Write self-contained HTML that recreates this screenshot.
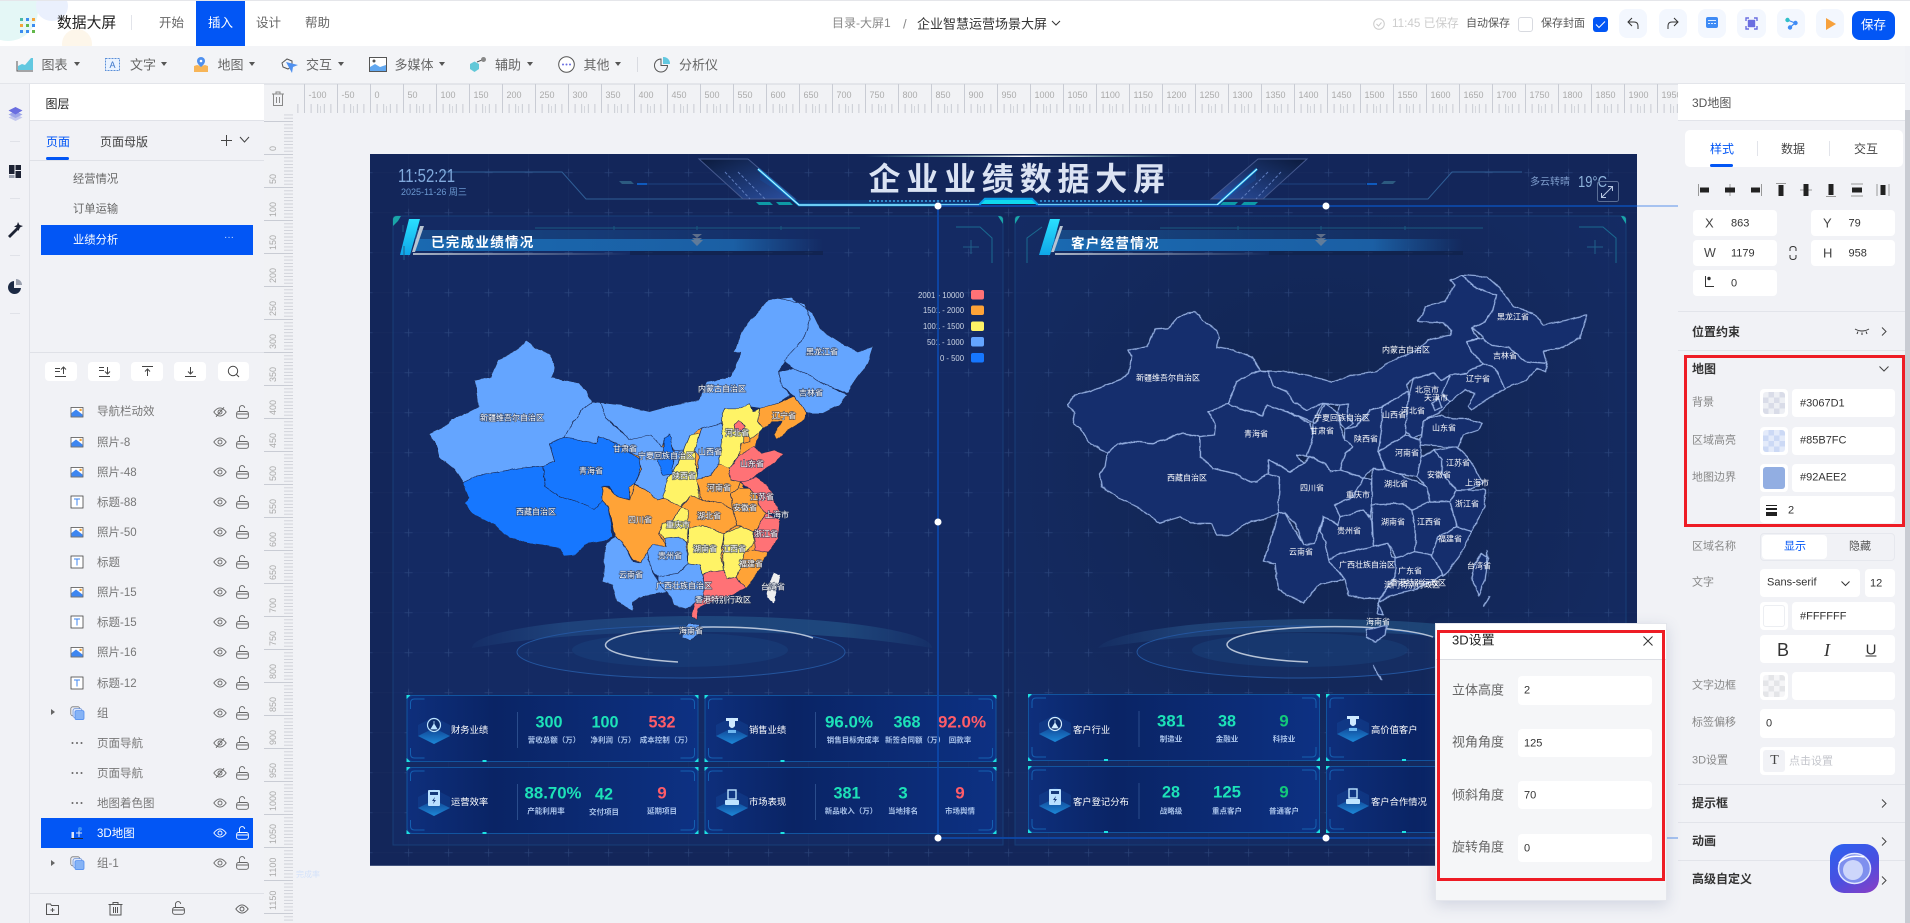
<!DOCTYPE html>
<html lang="zh"><head><meta charset="utf-8"><title>数据大屏</title>
<style>
*{box-sizing:border-box}
html,body{margin:0;padding:0;width:1910px;height:923px;overflow:hidden;background:#f1f2f6;font-family:"Liberation Sans","Noto Sans CJK SC",sans-serif;color:#333}
.a{position:absolute}
.t{position:absolute;white-space:nowrap;line-height:1;transform:translateY(-50%)}
.c{position:absolute;white-space:nowrap;line-height:1;transform:translate(-50%,-50%)}
svg{display:block}
.ic{position:absolute;overflow:visible}
.tb{font-size:13px;color:#666}
.caret{position:absolute;top:62px;width:0;height:0;border-left:3px solid transparent;border-right:3px solid transparent;border-top:4.5px solid #555}
.sq{position:absolute;top:9px;width:28px;height:29px;background:#f3f7fe;border-radius:8px}
.row{position:absolute;left:41px;width:212px;height:30px;color:#777;font-size:11.5px}
.row b{position:absolute;left:56px;top:9.5px;font-weight:400;line-height:13px;white-space:nowrap}
.row svg{position:absolute}
.row .i{left:29px;top:8px;width:14px;height:14px}
.row .e{left:172px;top:10px;width:14px;height:10px;color:#666}
.row .l{left:195px;top:8px;width:13px;height:14px;color:#666}
.tool{position:absolute;top:362px;height:19px;background:#fff;border-radius:4px}
.inp{position:absolute;background:#fff;border-radius:4px}
.lb{font-size:11px;color:#888}
.v{font-size:11px;color:#333}
.sec{font-size:12px;color:#333;font-weight:700}
.hr{position:absolute;left:1678px;width:227px;height:1px;background:#e2e4ea}
.ruler-x{position:absolute;left:304px;top:84px;height:29px;display:flex;font-size:9px;color:#aaa}
.ruler-x span{display:block;width:33px;flex:none;padding:6px 0 0 4.5px;line-height:10px}
.ruler-y{position:absolute;left:264px;top:121px;width:19px;font-size:9px;color:#aaa}
.ruler-y span{display:block;height:33px;width:19px;writing-mode:vertical-rl;transform:rotate(180deg);line-height:19px;padding-top:3px}
</style></head><body>

<svg width="0" height="0" style="position:absolute">
<defs>
<filter id="rough" x="-5%" y="-5%" width="110%" height="110%" color-interpolation-filters="sRGB"><feTurbulence type="fractalNoise" baseFrequency=".035" numOctaves="3" seed="4"/><feDisplacementMap in="SourceGraphic" scale="9" xChannelSelector="R" yChannelSelector="G"/></filter>
<symbol id="eye" viewBox="0 0 14 10"><path d="M.8 5C3 2 5 .9 7 .9s4 1.1 6.2 4.1C11 8 9 9.1 7 9.1S3 8 .8 5z" fill="none" stroke="currentColor" stroke-width=".9"/><circle cx="7" cy="5" r="2" fill="none" stroke="currentColor" stroke-width=".9"/></symbol>
<symbol id="eyeoff" viewBox="0 0 14 10"><path d="M.8 5C3 2 5 .9 7 .9s4 1.1 6.2 4.1C11 8 9 9.1 7 9.1S3 8 .8 5z" fill="none" stroke="currentColor" stroke-width=".9"/><circle cx="7" cy="5" r="2" fill="none" stroke="currentColor" stroke-width=".9"/><path d="M3 9.8L11 .3" stroke="currentColor" stroke-width=".9"/></symbol>
<symbol id="lock" viewBox="0 0 13 14"><rect x=".6" y="6.5" width="11.8" height="6.8" rx="2" fill="none" stroke="currentColor" stroke-width=".9"/><path d="M3.5 6.5V3.5a2.6 2.6 0 0 1 5.2-.6M.8 9h11.4" fill="none" stroke="currentColor" stroke-width=".9"/></symbol>
<symbol id="img" viewBox="0 0 14 14"><rect x="1" y="2.5" width="12" height="9.5" fill="#fff" stroke="#555" stroke-width=".8"/><path d="M1.5 11.5V8L6 4.5l6.5 5v2z" fill="#3e86f0"/><rect x="9.5" y="3.8" width="2.2" height="2.2" fill="#f4a438"/></symbol>
<symbol id="tx" viewBox="0 0 14 14"><rect x="1" y="1" width="12" height="12" fill="#fff" stroke="#444" stroke-width=".8"/><path d="M4 4h6M7 4v6.5" fill="none" stroke="#3e86f0"/></symbol>
<symbol id="grp" viewBox="0 0 15 14"><rect x=".8" y=".8" width="9" height="9" rx="2" fill="none" stroke="#777" stroke-width=".8"/><rect x="3" y="2.6" width="9" height="9" rx="2" fill="#dde7fb" stroke="#6d93d8" stroke-width=".8"/><rect x="5" y="4.6" width="9" height="9" rx="1.5" fill="#86b3f5" stroke="#4f8cf0" stroke-width=".8"/></symbol>
<symbol id="dots" viewBox="0 0 14 14"><circle cx="2.5" cy="7" r="1" fill="#666"/><circle cx="7" cy="7" r="1" fill="#666"/><circle cx="11.5" cy="7" r="1" fill="#666"/></symbol>
<linearGradient id="dia" x1="0" y1="0" x2="0" y2="1"><stop offset="0" stop-color="#0d3d8a"/><stop offset="1" stop-color="#1f9be8"/></linearGradient>
<linearGradient id="cardg" x1="0" y1="0" x2="1" y2="0"><stop offset="0" stop-color="#0e2f7c"/><stop offset=".3" stop-color="#0a2465"/><stop offset="1" stop-color="#0d3183"/></linearGradient>
<symbol id="card" viewBox="0 0 292 67" overflow="visible">
<rect x=".5" y=".5" width="291" height="66" rx="5" fill="url(#cardg)" stroke="#12549f"/>
<path d="M4 14V8q0-4 4-4h10M274 4h10q4 0 4 4v6M4 53v6q0 4 4 4h10M274 63h10q4 0 4-4v-6" fill="none" stroke="#155fb0"/>
<path d="M0 4V0h4zM292 4V0h-4zM0 63v4h4zM292 63v4h-4z" fill="#1de2e2"/>
<rect x="76" y="65" width="4" height="2" fill="#1de2e2"/>
<path d="M111 17V53" stroke="#2a4c8c"/>
</symbol>
<g id="iso"><path d="M-16 1L0 -7L16 1L0 9z" fill="url(#dia)"/><path d="M-16 1L0 9L16 1L16 -10L0 -18L-16 -10z" fill="#1a56ab" opacity=".28"/></g>
<pattern id="cross" width="40" height="40" patternUnits="userSpaceOnUse" x="-11.4" y="-7.3"><path d="M20 16V24M16 20H24" stroke="#5c7fba" stroke-opacity=".26" stroke-width=".8"/><path d="M0 20H40M20 0V40" stroke="#5c7fba" stroke-opacity=".04"/></pattern>
<linearGradient id="ban1" x1="0" x2="1" y1="0" y2="0"><stop offset="0" stop-color="#1a69b0"/><stop offset=".78" stop-color="#1b5fa4"/><stop offset="1" stop-color="#1b5a9e" stop-opacity="0"/></linearGradient>
<linearGradient id="ban2" x1="0" x2="1" y1="0" y2="0"><stop offset="0" stop-color="#1a5c9c" stop-opacity=".6"/><stop offset="1" stop-color="#1a5c9c" stop-opacity="0"/></linearGradient>
<linearGradient id="und" x1="0" x2="1" y1="0" y2="0"><stop offset="0" stop-color="#a9b3c4"/><stop offset="1" stop-color="#a9b3c4" stop-opacity="0"/></linearGradient>
<linearGradient id="cy" x1="0" x2="0" y1="0" y2="1"><stop offset="0" stop-color="#2ae0ff"/><stop offset="1" stop-color="#0fa6e8"/></linearGradient>
<linearGradient id="trap" x1="0" x2="1" y1="0" y2="1"><stop offset="0" stop-color="#0b1a3c"/><stop offset="1" stop-color="#2b4fa0"/></linearGradient>
<linearGradient id="trap2" x1="1" x2="0" y1="0" y2="1"><stop offset="0" stop-color="#0b1a3c"/><stop offset="1" stop-color="#2b4fa0"/></linearGradient>
<linearGradient id="topl" x1="0" x2="1" y1="0" y2="0"><stop offset="0" stop-color="#9fd" stop-opacity="0"/><stop offset=".5" stop-color="#fff"/><stop offset="1" stop-color="#9fd" stop-opacity="0"/></linearGradient>
<linearGradient id="ringb" x1="0" x2="1" y1="0" y2="0"><stop offset="0" stop-color="#2b5f96" stop-opacity=".08"/><stop offset=".2" stop-color="#2b5f96" stop-opacity=".45"/><stop offset=".8" stop-color="#2b6a9a" stop-opacity=".45"/><stop offset="1" stop-color="#2b6a9a" stop-opacity=".08"/></linearGradient>
<radialGradient id="cv" cx=".5" cy=".4" r=".7"><stop offset="0" stop-color="#11244f"/><stop offset="1" stop-color="#152c66"/></radialGradient>
<clipPath id="clipC"><rect x="370" y="154" width="1267" height="712"/></clipPath>
</defs>
</svg>

<!-- CANVAS -->
<svg class="a" style="left:0;top:0;font-family:'Liberation Sans','Noto Sans CJK SC',sans-serif" width="1910" height="923" viewBox="0 0 1910 923">
<g clip-path="url(#clipC)">
<rect x="370" y="154" width="1267" height="712" fill="#13265a"/>
<rect x="393" y="216" width="610" height="629" fill="#14295f"/>
<rect x="1015" y="216" width="611" height="629" fill="url(#cv)"/>
<rect x="393" y="216" width="610" height="629" fill="#16306e" opacity=".3"/>
<rect x="370" y="154" width="1267" height="712" fill="url(#cross)"/>
<path d="M393 845V220q0-4 4-4H999q4 0 4 4V845zM1015 845V220q0-4 4-4H1622q4 0 4 4V845z" fill="none" stroke="#173f78"/>
<path d="M398 221l-5 5v-6q0-4 4-4h4zM998 216h1q4 0 4 4v4zM1020 216h-1q-4 0-4 4v4zM1621 216h1q4 0 4 4v4z" fill="#1aa5a8"/>
<!-- header lines -->
<path d="M442 172H562L586 199H744M1522 172H1452L1428 199H1263" fill="none" stroke="#2f5e96"/>
<path d="M647 184H727M1278 184H1366" stroke="#1c4180"/>
<path d="M619 181h12l3 3h-12zM1381 184h12l3-3h-12z" fill="#2c5a80"/>
<rect x="637" y="183" width="10" height="2" fill="#0f5abd"/><rect x="1367" y="183" width="10" height="2" fill="#0f5abd"/>
<path d="M699 159H748L795 199H743z" fill="url(#trap)" stroke="#45598f"/>
<path d="M1307 159H1258L1211 199H1263z" fill="url(#trap2)" stroke="#45598f"/>
<path d="M738 172L765 199M725 172L750 199M1268 172L1241 199M1281 172L1256 199" stroke="#5d7bbc" stroke-dasharray="3 2"/>
<path d="M756 202h14l3 3h-14zM776 202h14l3 3h-14zM1238 202h-15l-3 3h15zM1258 202h-14l-3 3h14z" fill="#0e9aa6"/>
<rect x="864" y="155.5" width="319" height="1.5" fill="url(#topl)"/>
<path d="M760 180l38 24h420l38-24v-12l-38 32H798l-38-32z" fill="#0f60c0" opacity=".22"/>
<path d="M758 169L799 205H979L985 199H1032L1038 205H1217L1257 169" fill="none" stroke="#0a9fe8" stroke-width="2.4"/>
<path d="M758 169L799 205H979M1038 205H1217L1257 169" fill="none" stroke="#cdf8ff" stroke-width=".9"/>
<path d="M981 204l4-4h47l4 4z" fill="#10d9ec"/>
<path d="M869 201H970M1040 201H1142" stroke="#2f88c8" stroke-width="2" stroke-dasharray="2 2"/>
<!-- header text -->
<text x="868.5" y="190" fill="#dbe3f3" font-size="32" font-weight="700" letter-spacing="5.8" font-family="'Noto Sans CJK SC',sans-serif">企业业绩数据大屏</text>
<text x="398" y="182" fill="#80a9dc" font-size="18" textLength="57" lengthAdjust="spacingAndGlyphs">11:52:21</text>
<text x="401" y="195" fill="#6b98d0" font-size="9">2025-11-26   周三</text>
<text x="1530" y="185" fill="#7d9ccc" font-size="10">多云转晴</text>
<text x="1578" y="187" fill="#8fb4dc" font-size="16" textLength="29" lengthAdjust="spacingAndGlyphs">19°C</text>
<rect x="1597.5" y="181.5" width="21" height="20" rx="2" fill="none" stroke="#5a6e96"/>
<path d="M1602 197l10-10M1608 186.5h4.5v4.5M1606 197.500h-4.5v-4.5" stroke="#b9c8e2" fill="none"/>
<!-- Left banner -->
<rect x="415" y="230" width="408" height="9" fill="url(#ban2)"/>
<rect x="415" y="239" width="408" height="12" fill="url(#ban1)"/>
<rect x="630" y="251" width="193" height="4" fill="#0f1f46" opacity=".6"/>
<rect x="413" y="253" width="217" height="2" fill="url(#und)"/>
<path d="M409 219H420L410 255H400z" fill="url(#cy)"/>
<path d="M420 226H424L415 252H412z" fill="#b8c4d2"/>
<path d="M535 228H860M614 226v4M697 226v4M781 226v4" stroke="#1a5a80"/>
<path d="M692 234h10l-5 4zM692 238h10l-5 4zM691 240h12l-6 6z" fill="#7d8896" opacity=".7"/>
<text x="431" y="247" fill="#fff" font-size="13.5" font-weight="700" letter-spacing="1.3">已完成业绩情况</text>
<path d="M956 227H980L992 238V263M1579 227H1603L1616 238V263M1042 227L1027 238V263" fill="none" stroke="#1a6a90"/>
<path d="M971 240V254M963 247H979M1595 240V254M1587 247H1603" stroke="#1f5f8a"/>
<path d="M403 232V225M404 246v14" stroke="#1f5f8a"/>
<!-- Right banner -->
<rect x="1053" y="230" width="410" height="9" fill="url(#ban2)"/>
<rect x="1053" y="239" width="410" height="12" fill="url(#ban1)"/>
<rect x="1269" y="251" width="194" height="4" fill="#0f1f46" opacity=".6"/>
<rect x="1055" y="253" width="214" height="2" fill="url(#und)"/>
<path d="M1050 219H1060L1050 255H1039z" fill="url(#cy)"/>
<path d="M1060 226H1063L1054 252H1051z" fill="#b8c4d2"/>
<path d="M1160 228H1483M1238 226v4M1321 226v4M1405 226v4" stroke="#1a5a80"/>
<path d="M1316 234h10l-5 4zM1316 238h10l-5 4zM1315 240h12l-6 6z" fill="#7d8896" opacity=".7"/>
<text x="1071" y="248" fill="#fff" font-size="13.5" font-weight="700" letter-spacing="1.3">客户经营情况</text>

<!-- Rings left -->
<g>
<path d="M472 648A230 32 0 0 1 932 648C880 640 820 632 702 632S520 640 472 648z" fill="url(#ringb)"/>
<ellipse cx="681" cy="652" rx="164" ry="26" fill="#1a3b78" fill-opacity=".3" stroke="#24559e"/>
<ellipse cx="680" cy="650" rx="108" ry="17" fill="#1e4a86" fill-opacity=".35"/>
<path d="M813 638A108 18 0 1 0 678 662" fill="none" stroke="#b5c2d6" stroke-width="1.5"/>
</g>
<!-- Rings right -->
<g>
<path d="M1098 648A222 32 0 0 1 1540 648C1480 640 1420 632 1320 632S1150 640 1098 648z" fill="url(#ringb)"/>
<ellipse cx="1301" cy="652" rx="164" ry="26" fill="#1a3b78" fill-opacity=".3" stroke="#24559e"/>
<ellipse cx="1300" cy="650" rx="108" ry="17" fill="#1e4a86" fill-opacity=".35"/>
<path d="M1433 637A108 18 0 1 0 1308 662" fill="none" stroke="#b5c2d6" stroke-width="1.5"/>
</g>

<!-- LEFT MAP -->
<g transform="translate(380,280) scale(.40816,.33333)" stroke="#1c2a52" stroke-width="1.6" stroke-linejoin="round" filter="url(#rough)">
<polygon fill="#ffa337" stroke="none" points="620,470 840,410 930,450 890,620 945,760 885,900 760,950 650,850 570,700"/>
<polygon fill="#64a5ff" points="120,462 160,438 175,420 240,380 232,300 272,290 290,240 335,210 360,180 372,195 415,225 428,250 422,292 490,310 522,365 500,385 470,430 452,472 415,490 428,545 400,558 340,565 270,580 230,590 205,608 185,570 145,530 135,485"/>
<polygon fill="#1677ff" points="205,608 230,590 270,580 340,565 400,558 405,620 440,650 505,675 525,688 545,660 560,680 570,770 555,780 510,790 480,825 450,828 440,805 400,795 370,790 320,775 280,735 225,700 205,670 218,655"/>
<polygon fill="#1677ff" points="415,490 452,472 490,480 530,490 535,470 580,490 610,515 640,540 635,580 625,610 610,620 612,660 580,650 560,620 545,620 545,660 525,688 505,675 440,650 405,620 400,558 428,545"/>
<polygon fill="#64a5ff" points="452,472 470,430 500,385 522,365 540,368 555,415 600,465 610,480 665,462 690,500 720,512 745,510 720,570 705,590 695,655 680,660 660,640 625,612 640,570 635,530 610,515 580,490 535,470 530,490 490,480"/>
<polygon fill="#64a5ff" points="540,368 590,375 660,395 720,375 780,360 800,305 860,290 885,215 868,215 885,155 950,60 975,55 1040,70 1055,120 1040,170 1020,200 995,240 975,275 985,320 1005,345 975,370 935,385 905,380 880,385 845,385 835,430 790,445 770,460 745,510 720,512 705,470 690,500 665,465 610,480 590,450 555,415"/>
<polygon fill="#64a5ff" points="975,55 1010,52 1060,100 1080,150 1130,190 1170,215 1208,200 1195,250 1170,290 1145,340 1090,315 1060,290 1010,265 990,240 1020,200 1040,170 1055,120 1040,70"/>
<polygon fill="#64a5ff" points="975,275 1010,265 1060,290 1090,315 1145,345 1125,375 1085,400 1045,400 1015,348 985,320"/>
<polygon fill="#ffa337" points="930,385 975,370 1015,348 1045,400 1040,420 1000,450 970,480 965,465 985,425 960,425 940,445 925,425"/>
<polygon fill="#fff366" points="838,405 845,385 880,385 905,372 915,395 930,385 925,425 940,445 910,475 885,490 880,530 855,565 830,550 835,470"/>
<polygon fill="#ff7276" points="868,435 880,420 895,440 885,455 870,455"/>
<polygon fill="#ffa337" points="890,470 905,460 905,485 890,490"/>
<polygon fill="#64a5ff" points="790,445 835,430 838,470 830,550 810,585 775,600 780,530 770,510"/>
<polygon fill="#fff366" points="760,465 785,462 770,515 778,600 780,630 785,655 760,645 735,680 695,655 705,590 720,570 745,510"/>
<polygon fill="#1677ff" points="695,475 710,462 715,500 720,530 715,580 695,585 680,545 695,510"/>
<polygon fill="#ff7276" points="855,565 880,530 915,500 935,520 965,510 990,522 965,550 940,570 920,590 905,610 880,605 860,600"/>
<polygon fill="#ffa337" points="830,550 855,565 860,600 885,605 880,625 860,640 865,690 835,670 790,660 775,600 810,585"/>
<polygon fill="#ff7276" points="905,600 920,592 950,615 970,670 980,700 945,700 925,675 925,650 905,625 885,605"/>
<polygon fill="#ffa337" points="880,625 905,625 925,650 925,675 945,700 925,745 915,755 885,740 875,735 865,690 860,640"/>
<polygon fill="#ff7276" points="945,700 980,720 975,780 950,815 920,810 915,755 925,745"/>
<polygon fill="#ffa337" points="760,645 790,660 835,670 865,690 875,735 840,760 790,735 755,745 745,715 738,680"/>
<polygon fill="#fff366" points="690,730 715,725 738,680 755,690 755,745 752,790 730,770 695,775 685,755"/>
<polygon fill="#ffa337" points="545,620 560,625 580,650 612,660 625,612 660,640 680,660 695,655 738,680 715,725 690,730 685,765 700,800 670,795 655,815 640,850 620,840 595,790 575,770 560,680 545,660"/>
<polygon fill="#64a5ff" points="575,770 595,790 620,845 640,850 655,815 665,870 680,905 705,935 660,945 620,965 618,992 580,965 570,915 545,905 555,790"/>
<polygon fill="#64a5ff" points="655,815 670,795 700,800 695,775 730,770 752,790 755,850 730,880 680,890 665,870"/>
<polygon fill="#fff366" points="755,745 790,735 840,760 835,820 840,870 810,875 790,885 785,855 755,850"/>
<polygon fill="#fff366" points="840,760 885,740 915,755 915,790 895,820 875,890 850,895 840,870"/>
<polygon fill="#ffa337" points="895,815 920,810 950,815 925,880 895,925 875,890"/>
<polygon fill="#ff7276" points="790,885 810,875 840,870 850,895 875,890 895,925 865,945 820,960 780,985 775,1020 762,1010 770,970 790,960 795,920"/>
<polygon fill="#64a5ff" points="680,890 730,880 755,850 785,855 790,885 795,920 790,960 770,970 752,985 720,975 705,935 680,905"/>
<polygon fill="#64a5ff" points="755,1032 785,1030 785,1060 760,1082 742,1070 742,1050"/>
<polygon fill="#eeeeee" stroke="none" points="965,878 980,885 965,970 950,950 950,920"/>
</g>
<g font-size="8" fill="#fff" text-anchor="middle" stroke="#23304e" stroke-width="1.3" paint-order="stroke" dominant-baseline="central" stroke-opacity=".75">
<text x="512" y="418">新疆维吾尔自治区</text><text x="536" y="512">西藏自治区</text><text x="591" y="471">青海省</text><text x="625" y="449">甘肃省</text><text x="666" y="456">宁夏回族自治区</text><text x="722" y="389">内蒙古自治区</text><text x="822" y="352">黑龙江省</text><text x="811" y="393">吉林省</text><text x="784" y="416">辽宁省</text><text x="737" y="433">河北省</text><text x="710" y="452">山西省</text><text x="752" y="464">山东省</text><text x="684" y="476">陕西省</text><text x="719" y="488">河南省</text><text x="762" y="497">江苏省</text><text x="745" y="508">安徽省</text><text x="777" y="515">上海市</text><text x="709" y="516">湖北省</text><text x="640" y="520">四川省</text><text x="678" y="525">重庆市</text><text x="766" y="534">浙江省</text><text x="705" y="549">湖南省</text><text x="734" y="549">江西省</text><text x="670" y="556">贵州省</text><text x="751" y="564">福建省</text><text x="631" y="575">云南省</text><text x="684" y="586">广西壮族自治区</text><text x="773" y="587">台湾省</text><text x="723" y="600">香港特别行政区</text><text x="691" y="631">海南省</text>
</g>
<!-- Legend -->
<g font-size="8.5" fill="#cdd6e6" text-anchor="end" dominant-baseline="central">
<text x="964" y="295" textLength="46" lengthAdjust="spacingAndGlyphs">2001 - 10000</text><text x="964" y="310" textLength="41" lengthAdjust="spacingAndGlyphs">1501 - 2000</text><text x="964" y="326" textLength="41" lengthAdjust="spacingAndGlyphs">1001 - 1500</text><text x="964" y="342" textLength="37" lengthAdjust="spacingAndGlyphs">501 - 1000</text><text x="964" y="358" textLength="24" lengthAdjust="spacingAndGlyphs">0 - 500</text>
</g>
<rect x="971" y="290" width="13" height="9.5" rx="2" fill="#ff7276"/><rect x="971" y="305.5" width="13" height="9.5" rx="2" fill="#ffa337"/><rect x="971" y="321.5" width="13" height="9.5" rx="2" fill="#fff366"/><rect x="971" y="337" width="13" height="9.5" rx="2" fill="#64a5ff"/><rect x="971" y="353" width="13" height="9.5" rx="2" fill="#1677ff"/>

<!-- RIGHT MAP -->
<g transform="translate(1020,260) scale(.33333)" fill="#152e6d" stroke="#9bb5e6" stroke-width="3.6" stroke-linejoin="round" filter="url(#rough)">
<polygon points="145,432 165,405 205,395 230,385 300,360 325,340 335,290 325,270 380,262 405,208 445,205 470,175 500,158 525,155 550,182 590,210 598,235 590,262 640,270 695,290 722,332 690,345 650,365 625,432 565,455 585,490 582,525 540,530 490,520 400,550 340,545 290,555 262,580 240,570 205,545 180,505 160,490 165,455 145,440"/>
<polygon points="262,580 290,555 340,545 400,550 490,520 540,530 540,590 580,625 640,640 690,665 735,650 745,610 770,610 780,650 778,760 740,775 690,785 630,825 590,825 575,790 510,790 480,770 420,790 360,745 300,715 245,680 240,640 255,620"/>
<polygon points="565,455 625,432 660,445 725,465 740,435 800,455 870,490 885,530 860,590 830,585 850,610 810,635 780,620 745,600 745,640 710,665 690,665 640,640 580,625 540,590 540,530 582,525 585,490"/>
<polygon points="625,432 650,365 690,345 722,332 745,335 760,380 800,395 820,425 860,450 910,430 880,480 880,530 860,590 870,590 915,610 930,635 960,630 975,580 1000,560 975,540 960,500 955,460 915,430 885,490 800,455 740,435 725,465 660,445"/>
<polygon points="722,332 800,335 860,345 935,365 1000,345 1070,335 1110,305 1190,270 1225,240 1290,225 1295,210 1270,188 1195,185 1215,140 1275,125 1290,100 1305,75 1290,60 1325,45 1370,85 1430,105 1420,145 1395,185 1355,205 1375,235 1340,245 1355,275 1390,310 1340,340 1290,345 1290,380 1265,360 1240,340 1180,355 1160,375 1165,395 1085,440 1050,450 1010,500 975,505 985,432 960,435 910,430 860,450 820,425 800,395 760,380 745,335"/>
<polygon points="960,435 985,432 980,470 1000,490 975,505 960,490 955,460"/>
<polygon points="1085,440 1165,395 1165,470 1155,525 1075,575 1085,505"/>
<polygon points="975,505 1010,500 1050,450 1085,440 1085,505 1075,575 1095,630 1060,625 1030,655 960,630 975,580 1000,560 975,540"/>
<g transform="translate(1140,15)">
<polygon points="185,30 260,35 300,70 340,125 400,145 430,180 480,170 560,150 540,220 480,250 430,260 440,295 380,290 330,250 270,240 250,220 235,200 215,190 255,170 280,130 290,90 230,70"/>
<polygon points="200,230 250,220 270,240 330,250 380,290 440,295 435,320 410,310 380,345 340,360 315,370 285,310 250,295 215,260"/>
<polygon points="250,295 285,310 315,370 265,400 215,435 205,425 225,385 195,375 150,410 125,385 150,330 200,325"/>
<polygon points="40,340 100,325 125,345 150,330 125,385 150,410 115,445 70,465 65,510 40,520 15,500 20,440 25,400"/>
<polygon points="95,415 115,400 125,425 105,435"/>
<polygon points="70,465 125,450 160,460 195,460 245,475 235,495 190,510 175,545 130,545 60,540 50,540 65,515"/>
</g>
<polygon points="1075,575 1155,525 1200,540 1205,590 1190,650 1130,640 1095,630"/>
<polygon points="1060,625 1095,630 1130,640 1220,680 1230,730 1175,750 1150,730 1055,735 1055,660"/>
<polygon points="1205,590 1240,570 1265,600 1265,640 1310,690 1290,725 1230,725 1220,680 1190,650"/>
<polygon points="1240,570 1310,560 1350,600 1390,670 1340,690 1310,690 1265,640 1265,600"/>
<polygon points="1310,690 1395,690 1395,740 1355,815 1310,800 1290,725"/>
<polygon points="1175,750 1230,725 1290,725 1310,800 1255,830 1235,885 1185,875 1185,800"/>
<polygon points="1255,830 1310,800 1355,815 1320,885 1270,950 1235,885"/>
<polygon points="1055,735 1150,730 1175,750 1185,800 1185,875 1130,895 1105,850 1060,860"/>
<polygon points="925,900 960,880 1060,860 1105,850 1115,890 1130,895 1125,950 1080,1015 1030,1015 985,1005 975,955 930,910"/>
<polygon points="1125,895 1185,875 1235,885 1270,945 1180,990 1100,1010 1075,1030 1090,1065 1070,1060 1080,1015 1125,950"/>
<polygon points="900,815 910,770 955,795 960,770 1030,750 1055,780 1060,860 960,880 925,900 915,845"/>
<polygon points="945,735 1000,710 1030,655 1055,660 1055,735 1050,770 1030,750 960,770"/>
<polygon points="745,600 780,620 810,635 850,610 870,590 915,610 930,635 960,630 1030,655 1000,710 945,735 960,770 955,795 910,770 885,850 850,855 825,790 795,760 775,760 780,650 745,640"/>
<polygon points="775,760 795,760 850,855 885,850 910,770 900,815 915,845 930,910 975,955 895,975 850,1030 800,1005 775,985 765,910 730,905 765,800"/>
<polygon points="1040,1110 1100,1095 1095,1125 1065,1145 1040,1130"/>
<polygon points="1385,880 1405,895 1395,960 1378,1005 1355,960 1365,910"/>
<path d="M1400 870v40M1410 1010l-20 30M1060 1215l25 45" fill="none"/>
</g>
<g font-size="8" fill="#fff" text-anchor="middle" dominant-baseline="central">
<text x="1168" y="378">新疆维吾尔自治区</text><text x="1187" y="478">西藏自治区</text><text x="1256" y="434">青海省</text><text x="1322" y="431">甘肃省</text><text x="1342" y="418">宁夏回族自治区</text><text x="1406" y="350">内蒙古自治区</text><text x="1427" y="390">北京市</text><text x="1436" y="398">天津市</text><text x="1478" y="379">辽宁省</text><text x="1394" y="415">山西省</text><text x="1413" y="411">河北省</text><text x="1444" y="428">山东省</text><text x="1366" y="439">陕西省</text><text x="1407" y="453">河南省</text><text x="1458" y="463">江苏省</text><text x="1439" y="475">安徽省</text><text x="1477" y="483">上海市</text><text x="1396" y="484">湖北省</text><text x="1312" y="488">四川省</text><text x="1358" y="495">重庆市</text><text x="1467" y="504">浙江省</text><text x="1393" y="522">湖南省</text><text x="1429" y="522">江西省</text><text x="1349" y="531">贵州省</text><text x="1450" y="539">福建省</text><text x="1301" y="552">云南省</text><text x="1367" y="565">广西壮族自治区</text><text x="1410" y="571">广东省</text><text x="1418" y="583">香港特别行政区</text><text x="1412" y="585">澳门特别行政区</text><text x="1479" y="566">台湾省</text><text x="1378" y="622">海南省</text><text x="1513" y="317">黑龙江省</text><text x="1505" y="356">吉林省</text>
</g>

<!-- CARDS -->
<g>
<use href="#card" x="406.5" y="695" width="292" height="67"/><use href="#card" x="704.5" y="695" width="292" height="67"/>
<use href="#card" x="406.5" y="767" width="292" height="67"/><use href="#card" x="704.5" y="767" width="292" height="67"/>
<use href="#card" x="1028" y="694" width="292" height="67"/><use href="#card" x="1326" y="694" width="292" height="67"/>
<use href="#card" x="1028" y="766" width="292" height="67"/><use href="#card" x="1326" y="766" width="292" height="67"/>
</g>
<!-- card icons -->
<g><use href="#iso" x="434" y="735"/><circle cx="434" cy="725" r="6.5" fill="#0d2d6a" stroke="#bde4ff" stroke-width="1.2"/><path d="M434 721v4M431 729h6l-3-5z" fill="#bde4ff" stroke="#bde4ff" stroke-width=".8"/></g>
<g><use href="#iso" x="732" y="735"/><path d="M726 718h12v3h-3v5q-3 4-6 0v-5h-3z" fill="#cfeaff"/><path d="M728 730h8v3h-8z" fill="#6fb8f0"/></g>
<g><use href="#iso" x="434" y="807"/><rect x="428" y="790" width="12" height="16" rx="1" fill="#b9e0ff"/><rect x="430" y="792" width="8" height="3" fill="#15397a"/><path d="M435 797l-3 4h2l-1 3 3-4h-2z" fill="#15397a"/></g>
<g><use href="#iso" x="732" y="807"/><rect x="728" y="790" width="8" height="9" fill="none" stroke="#bde4ff" stroke-width="1.4"/><rect x="725" y="800" width="14" height="5" rx="1" fill="#bde4ff"/></g>
<g><use href="#iso" x="1055" y="733"/><circle cx="1055" cy="724" r="6.5" fill="#0d2d6a" stroke="#d5eeff" stroke-width="1.2"/><path d="M1055 720v4M1052 728h6l-3-5z" fill="#d5eeff" stroke="#d5eeff" stroke-width=".8"/></g>
<g><use href="#iso" x="1353" y="733"/><path d="M1347 716h12v3h-3v5q-3 4-6 0v-5h-3z" fill="#cfeaff"/><path d="M1349 728h8v3h-8z" fill="#6fb8f0"/></g>
<g><use href="#iso" x="1055" y="805"/><rect x="1049" y="789" width="12" height="16" rx="1" fill="#b9e0ff"/><rect x="1051" y="791" width="8" height="3" fill="#15397a"/><path d="M1056 796l-3 4h2l-1 3 3-4h-2z" fill="#15397a"/></g>
<g><use href="#iso" x="1353" y="805"/><rect x="1349" y="789" width="8" height="9" fill="none" stroke="#bde4ff" stroke-width="1.4"/><rect x="1346" y="799" width="14" height="5" rx="1" fill="#bde4ff"/></g>
<!-- card titles -->
<g font-size="9.3" fill="#fff" dominant-baseline="central">
<text x="451" y="730">财务业绩</text><text x="749" y="730">销售业绩</text><text x="451" y="802">运营效率</text><text x="749" y="802">市场表现</text>
<text x="1073" y="730">客户行业</text><text x="1073" y="802">客户登记分布</text><text x="1371" y="730">高价值客户</text><text x="1371" y="802">客户合作情况</text>
</g>
<!-- values -->
<g font-size="17" font-weight="700" text-anchor="middle" dominant-baseline="central">
<g fill="#1de2b8">
<text x="549" y="722" textLength="27" lengthAdjust="spacingAndGlyphs">300</text><text x="605" y="722" textLength="27" lengthAdjust="spacingAndGlyphs">100</text><text x="849" y="722" textLength="48" lengthAdjust="spacingAndGlyphs">96.0%</text><text x="907" y="722" textLength="27" lengthAdjust="spacingAndGlyphs">368</text>
<text x="553" y="793" textLength="57" lengthAdjust="spacingAndGlyphs">88.70%</text><text x="604" y="794" textLength="18" lengthAdjust="spacingAndGlyphs">42</text><text x="847" y="793" textLength="27" lengthAdjust="spacingAndGlyphs">381</text><text x="903" y="793">3</text>
<text x="1171" y="721" textLength="28" lengthAdjust="spacingAndGlyphs">381</text><text x="1227" y="721" textLength="18" lengthAdjust="spacingAndGlyphs">38</text><text x="1171" y="792" textLength="18" lengthAdjust="spacingAndGlyphs">28</text><text x="1227" y="792" textLength="28" lengthAdjust="spacingAndGlyphs">125</text>
</g>
<g fill="#ff5c68"><text x="662" y="722" textLength="27" lengthAdjust="spacingAndGlyphs">532</text><text x="962" y="722" textLength="48" lengthAdjust="spacingAndGlyphs">92.0%</text><text x="662" y="793">9</text><text x="960" y="793">9</text></g>
<g fill="#12c97a"><text x="1284" y="721">9</text><text x="1284" y="792">9</text></g>
</g>
<g font-size="7.5" font-weight="700" fill="#a8c2ea" text-anchor="middle" dominant-baseline="central">
<text x="554" y="740">营收总额（万）</text><text x="613" y="740">净利润（万）</text><text x="666" y="740">成本控制（万）</text>
<text x="853" y="740">销售目标完成率</text><text x="915" y="740">新签合同额（万）</text><text x="960" y="740">回款率</text>
<text x="546" y="811">产能利用率</text><text x="604" y="812">交付项目</text><text x="662" y="811">延期项目</text>
<text x="851" y="811">新品收入（万）</text><text x="903" y="811">当地排名</text><text x="960" y="811">市场舆情</text>
<text x="1171" y="739">制造业</text><text x="1227" y="739">金融业</text><text x="1284" y="739">科技业</text>
<text x="1171" y="811">战略级</text><text x="1227" y="811">重点客户</text><text x="1284" y="811">普通客户</text>
</g>
<!-- selection guides -->
<path d="M938 206V838M938 206H1637M938 838H1637" stroke="#0d48a8" stroke-width="1.8" fill="none"/>
<g fill="#fff"><ellipse cx="938" cy="206" rx="3.5" ry="3.5"/><ellipse cx="1326" cy="206" rx="3.5" ry="3.5"/><ellipse cx="938" cy="522" rx="3.5" ry="3.5"/><ellipse cx="938" cy="838" rx="3.5" ry="3.5"/><ellipse cx="1326" cy="838" rx="3.5" ry="3.5"/></g>
</g>
<rect x="370" y="865" width="1267" height="1" fill="#44557f"/>
<path d="M1637 206H1678M1664 838H1678" stroke="#9cbcf0" stroke-width="1.8"/>
<text x="296" y="877" font-size="8" fill="#d4e2fa">完成率</text>
</svg>

<!-- RULERS -->
<div class="a" style="left:264px;top:84px;width:1414px;height:29px;background:#f1f2f5;border-top:1px solid #e2e4e9"></div>
<svg class="a" style="left:293px;top:84px" width="1385" height="29"><defs><pattern id="rx" width="33" height="29" patternUnits="userSpaceOnUse" x="11"><path d="M.5 0V29" stroke="#c9ccd4"/><path d="M7.1 20V29M13.7 20V29M20.3 20V29M26.9 20V29" stroke="#c4c7cf" stroke-width=".9"/><path d="M16.5 22V29" stroke="#d6d8de"/></pattern></defs><rect width="1385" height="29" fill="url(#rx)"/></svg>
<div class="ruler-x"><span>-100</span><span>-50</span><span>0</span><span>50</span><span>100</span><span>150</span><span>200</span><span>250</span><span>300</span><span>350</span><span>400</span><span>450</span><span>500</span><span>550</span><span>600</span><span>650</span><span>700</span><span>750</span><span>800</span><span>850</span><span>900</span><span>950</span><span>1000</span><span>1050</span><span>1100</span><span>1150</span><span>1200</span><span>1250</span><span>1300</span><span>1350</span><span>1400</span><span>1450</span><span>1500</span><span>1550</span><span>1600</span><span>1650</span><span>1700</span><span>1750</span><span>1800</span><span>1850</span><span>1900</span><span>1950</span></div>
<svg class="a" style="left:264px;top:113px" width="29" height="810"><defs><pattern id="ry" width="29" height="33" patternUnits="userSpaceOnUse" y="8"><path d="M0 .5H29" stroke="#c9ccd4"/><path d="M20 3.8H29M20 7.1H29M20 10.4H29M20 13.7H29M20 17H29M20 20.3H29M20 23.6H29M20 26.9H29M20 30.2H29" stroke="#cdd0d7" stroke-width=".9"/></pattern></defs><rect width="29" height="810" fill="#f1f2f5"/><rect width="29" height="810" fill="url(#ry)"/></svg>
<div class="ruler-y"><span>0</span><span>50</span><span>100</span><span>150</span><span>200</span><span>250</span><span>300</span><span>350</span><span>400</span><span>450</span><span>500</span><span>550</span><span>600</span><span>650</span><span>700</span><span>750</span><span>800</span><span>850</span><span>900</span><span>950</span><span>1000</span><span>1050</span><span>1100</span><span>1150</span></div>
<svg class="ic" style="left:271px;top:91px" width="14" height="16" viewBox="0 0 14 16" fill="none" stroke="#888"><path d="M1 3H13M5 3V1H9V3M2.5 3V14.5H11.5V3M5.5 6V12M8.5 6V12"/></svg>

<!-- TOP BAR -->
<div class="a" style="left:0;top:0;width:1910px;height:1px;background:#e5e6ea"></div>
<div class="a" style="left:0;top:1px;width:1910px;height:45px;background:#fff;overflow:hidden">
<div class="a" style="left:-22px;top:-22px;width:60px;height:62px;border-radius:50%;background:#e4f7f6"></div>
<div class="a" style="left:36px;top:-10px;width:32px;height:30px;border-radius:50%;background:#eaf0fd"></div>
<div class="a" style="left:62px;top:28px;width:30px;height:30px;border-radius:50%;background:#fdf6ea"></div>
</div>
<svg class="ic" style="left:20px;top:18px" width="16" height="15" viewBox="0 0 16 15"><g fill="#3a8cf0"><rect x="0" y="0" width="3" height="3" fill="#4ab8a6"/><rect x="6" y="0" width="3" height="3"/><rect x="12" y="0" width="3" height="3" fill="#f4a438"/><rect x="0" y="6" width="3" height="3" fill="#f4a438"/><rect x="6" y="6" width="3" height="3" fill="#62b84a"/><rect x="12" y="6" width="3" height="3"/><rect x="0" y="12" width="3" height="3"/><rect x="6" y="12" width="3" height="3"/><rect x="12" y="12" width="3" height="3" fill="#62b84a"/></g></svg>
<div class="t" style="left:57px;top:24px;font-size:14.8px;color:#222">数据大屏</div>
<div class="a" style="left:131px;top:15px;width:1px;height:15px;background:#e2e4ea"></div>
<div class="t" style="left:159px;top:23px;font-size:12.5px;color:#666">开始</div>
<div class="a" style="left:196px;top:1px;width:49px;height:45px;background:#0256f5"></div>
<div class="t" style="left:208px;top:23px;font-size:12.5px;color:#fff">插入</div>
<div class="t" style="left:256px;top:23px;font-size:12.5px;color:#666">设计</div>
<div class="t" style="left:305px;top:23px;font-size:12.5px;color:#666">帮助</div>
<div class="t" style="left:832px;top:23px;font-size:12px;color:#888">目录-大屏1</div>
<div class="t" style="left:903px;top:24px;font-size:13px;color:#888">/</div>
<div class="t" style="left:917px;top:24px;font-size:13px;color:#333">企业智慧运营场景大屏</div>
<svg class="ic" style="left:1051px;top:20px" width="10" height="7"><path d="M1 1l4 4 4-4" fill="none" stroke="#333"/></svg>
<svg class="ic" style="left:1373px;top:18px" width="12" height="12" viewBox="0 0 12 12" fill="none" stroke="#ccc"><circle cx="6" cy="6" r="5.3"/><path d="M3.5 6l2 2 3-3.5"/></svg>
<div class="t" style="left:1392px;top:24px;font-size:11.7px;color:#ccc">11:45 已保存</div>
<div class="t" style="left:1466px;top:24px;font-size:11px;color:#555">自动保存</div>
<div class="a" style="left:1518px;top:17px;width:15px;height:15px;border:1px solid #d8dae0;border-radius:3px;background:#fff"></div>
<div class="t" style="left:1541px;top:24px;font-size:11px;color:#555">保存封面</div>
<div class="a" style="left:1593px;top:17px;width:15px;height:15px;border-radius:3px;background:#0256f5"></div>
<svg class="ic" style="left:1595px;top:20px" width="11" height="9"><path d="M1 4.5l3 3 6-6" fill="none" stroke="#fff"/></svg>
<div class="sq" style="left:1619px"></div><div class="sq" style="left:1659px"></div><div class="sq" style="left:1698px"></div><div class="sq" style="left:1737px;width:29px"></div><div class="sq" style="left:1777px"></div><div class="sq" style="left:1816px"></div>
<svg class="ic" style="left:1627px;top:17px" width="12" height="13" fill="none" stroke="#333"><path d="M5 1L1 5l4 4M1 5h6q4 0 4 4v3"/></svg>
<svg class="ic" style="left:1667px;top:17px" width="12" height="13" fill="none" stroke="#333"><path d="M7 1l4 4-4 4M11 5H5Q1 5 1 9v3"/></svg>
<svg class="ic" style="left:1706px;top:17px" width="12" height="12"><rect width="12" height="11" rx="2" fill="#3f8bf5"/><path d="M2 3.5h8M2 6.5h2M5 6.5h2M8 6.5h2" stroke="#dcebff"/></svg>
<svg class="ic" style="left:1745px;top:17px" width="13" height="13" fill="none" stroke="#6a6ee0" stroke-width="1.4"><path d="M1 4V1h3M9 1h3v3M12 9v3H9M4 12H1V9"/><rect x="3.5" y="3.5" width="6" height="6" fill="#6a6ee0"/></svg>
<svg class="ic" style="left:1785px;top:17px" width="13" height="13"><path d="M2.5 3L10 6 5 10.5" fill="none" stroke="#3f8bf5" stroke-width="1.2"/><circle cx="2.5" cy="3" r="2.2" fill="#2fc0c8"/><circle cx="10.5" cy="6" r="2.2" fill="#3f8bf5"/><circle cx="5" cy="10.5" r="2.2" fill="#3f8bf5"/></svg>
<svg class="ic" style="left:1826px;top:18px" width="10" height="12"><path d="M0 0L10 6 0 12z" fill="#f7a13c"/></svg>
<div class="a" style="left:1852px;top:11px;width:43px;height:29px;background:#0256f5;border-radius:8px"></div>
<div class="c" style="left:1873.5px;top:25px;font-size:12.5px;color:#fff">保存</div>

<!-- TOOLBAR -->
<div class="a" style="left:0;top:46px;width:1905px;height:38px;background:#f3f4f7;border-bottom:1px solid #e3e5ea"></div>
<svg class="ic" style="left:16px;top:57px" width="18" height="15" viewBox="0 0 18 15"><path d="M1 4V14H17" fill="none" stroke="#555"/><path d="M2 9l4-2 3 1 6-7h2v12H2z" fill="#62c8e0"/></svg>
<div class="t tb" style="left:41.5px;top:65px">图表</div><div class="caret" style="left:73.5px"></div>
<svg class="ic" style="left:104px;top:57px" width="17" height="15" viewBox="0 0 17 15"><rect x="1.5" y="1.5" width="14" height="12" fill="#eaf3ff" stroke="#5a8fd8" stroke-dasharray="2 1"/><text x="8.5" y="11" font-size="9" text-anchor="middle" fill="#3a74c8">A</text></svg>
<div class="t tb" style="left:130px;top:65px">文字</div><div class="caret" style="left:161px"></div>
<svg class="ic" style="left:193px;top:56px" width="16" height="17" viewBox="0 0 16 17"><path d="M1 10l3-1 4 1 4-1 3 1v6H1z" fill="#f7b558"/><path d="M8 1a4 4 0 0 1 4 4c0 3-4 6-4 6S4 8 4 5a4 4 0 0 1 4-4z" fill="#4f90ef"/><circle cx="8" cy="5" r="1.3" fill="#fff"/></svg>
<div class="t tb" style="left:217.5px;top:65px">地图</div><div class="caret" style="left:249px"></div>
<svg class="ic" style="left:281px;top:57px" width="18" height="17" viewBox="0 0 18 17"><path d="M1 6l5-4 5 2v5l-4 3-5-2z" fill="none" stroke="#555"/><path d="M5 5l12 3-5 2-1 6z" fill="#4f90ef"/></svg>
<div class="t tb" style="left:306px;top:65px">交互</div><div class="caret" style="left:338px"></div>
<svg class="ic" style="left:369px;top:57px" width="18" height="15" viewBox="0 0 18 15"><rect x=".5" y=".5" width="17" height="14" fill="#fff" stroke="#555"/><path d="M1 14V10l5-3 5 3 6-2v6z" fill="#62a8f0"/><circle cx="5" cy="4" r="1.5" fill="#555"/></svg>
<div class="t tb" style="left:394.5px;top:65px">多媒体</div><div class="caret" style="left:439px"></div>
<svg class="ic" style="left:469px;top:56px" width="18" height="17" viewBox="0 0 18 17"><path d="M1 8l4.500-2.5L10 8v5l-4.500 3L1 13z" fill="#62c8d8"/><path d="M8 6l5-2" stroke="#555"/><circle cx="14.5" cy="3.5" r="2.5" fill="#888"/></svg>
<div class="t tb" style="left:495px;top:65px">辅助</div><div class="caret" style="left:526.5px"></div>
<svg class="ic" style="left:558px;top:56px" width="17" height="17" viewBox="0 0 17 17"><circle cx="8.5" cy="8.5" r="7.8" fill="#fff" stroke="#555"/><circle cx="5" cy="8.5" r="1" fill="#6a6ee0"/><circle cx="8.5" cy="8.5" r="1" fill="#6a6ee0"/><circle cx="12" cy="8.5" r="1" fill="#6a6ee0"/></svg>
<div class="t tb" style="left:583.5px;top:65px">其他</div><div class="caret" style="left:615px"></div>
<div class="a" style="left:637px;top:57px;width:1px;height:15px;background:#d9dbe1"></div>
<svg class="ic" style="left:653px;top:56px" width="18" height="17" viewBox="0 0 18 17"><path d="M8 3a6.500 6.500 0 1 0 6.500 6.500H8z" fill="none" stroke="#555"/><path d="M10 1a6.500 6.500 0 0 1 7 7h-7z" fill="#62c8e0"/></svg>
<div class="t tb" style="left:679px;top:65px">分析仪</div>

<!-- LEFT RAIL -->
<div class="a" style="left:0;top:84px;width:30px;height:839px;background:#f1f2f6;border-right:1px solid #e0e2e8"></div>
<svg class="ic" style="left:8px;top:107px" width="15" height="16" viewBox="0 0 15 16"><path d="M7.5 7L14.5 10.5 7.5 14 .5 10.5z" fill="#c3c7ee"/><path d="M7.5 4L14.5 7.5 7.5 11 .5 7.5z" fill="#9ea6e8"/><path d="M7.5 0L14.5 3.5 7.5 7.5 .5 3.5z" fill="#6a6ee0"/></svg>
<div class="a" style="left:10px;top:141px;width:10px;height:1px;background:#e0e2e8"></div>
<svg class="ic" style="left:9px;top:165px" width="13" height="13"><rect width="5.5" height="9" fill="#1c2233"/><rect x="6.5" y="0" width="5.5" height="5" fill="#1c2233"/><rect x="6.5" y="6" width="5.5" height="7" fill="#1c2233"/><rect x="0" y="10" width="5.5" height="3" fill="#9aa0ae"/></svg>
<div class="a" style="left:10px;top:198px;width:10px;height:1px;background:#e0e2e8"></div>
<svg class="ic" style="left:7px;top:220px" width="17" height="17"><path d="M1 16L10 7l2 2-9 9z" fill="#1c2233"/><path d="M11 2l1.5 3L16 6l-3 1.5L11.5 11 10 7.5 7 6.5 10 5z" fill="#1c2233"/></svg>
<div class="a" style="left:10px;top:255px;width:10px;height:1px;background:#e0e2e8"></div>
<svg class="ic" style="left:8px;top:279px" width="14" height="15" viewBox="0 0 14 15"><path d="M6 2a6.500 6.500 0 1 0 7 7H6z" fill="#1c2a44"/><path d="M8 0a6 6 0 0 1 6 6H8z" fill="#9aa0ae"/></svg>
<div class="a" style="left:10px;top:313px;width:10px;height:1px;background:#e0e2e8"></div>

<!-- LEFT PANEL -->
<div class="a" style="left:30px;top:84px;width:234px;height:839px;background:#f1f2f6"></div>
<div class="a" style="left:30px;top:84px;width:234px;height:37px;background:#fff;border-bottom:1px solid #e0e2e8"></div>
<div class="t" style="left:45.5px;top:104px;font-size:12px;color:#222">图层</div>
<div class="t" style="left:46px;top:142px;font-size:12px;color:#0256f5">页面</div>
<div class="t" style="left:100px;top:142px;font-size:12px;color:#444">页面母版</div>
<svg class="ic" style="left:221px;top:135px" width="30" height="11" fill="none" stroke="#444"><path d="M5.500 0V11M0 5.500H11M19 2l4.500 5L28 2"/></svg>
<div class="a" style="left:30px;top:160px;width:234px;height:1px;background:#dfe1e7"></div>
<div class="a" style="left:46px;top:157px;width:23px;height:3px;background:#0256f5;border-radius:2px"></div>
<div class="t" style="left:73px;top:180px;font-size:11.3px;color:#666">经营情况</div>
<div class="t" style="left:73px;top:210px;font-size:11.3px;color:#666">订单运输</div>
<div class="a" style="left:41px;top:225px;width:212px;height:30px;background:#0256f5"></div>
<div class="t" style="left:73px;top:241px;font-size:11.3px;color:#fff">业绩分析</div>
<div class="t" style="left:224px;top:238px;font-size:10px;color:#cfe0ff">···</div>
<div class="a" style="left:30px;top:352px;width:234px;height:1px;background:#dfe1e7"></div>

<div class="tool" style="left:45px;width:32px"></div><div class="tool" style="left:88px;width:32px"></div><div class="tool" style="left:131px;width:32px"></div><div class="tool" style="left:174px;width:32px"></div><div class="tool" style="left:218px;width:31px"></div>
<svg class="ic" style="left:55px;top:366px" width="12" height="11" fill="none" stroke="#444"><path d="M0 2.500h5M0 5.500h5M0 10.500h11M8.500 8V1M6 3.500L8.500 1 11 3.500"/></svg>
<svg class="ic" style="left:99px;top:366px" width="12" height="11" fill="none" stroke="#444"><path d="M0 1.500h5M0 4.500h5M0 10.500h11M8.500 1V8M6 5.500L8.500 8 11 5.500"/></svg>
<svg class="ic" style="left:142px;top:366px" width="12" height="11" fill="none" stroke="#444"><path d="M0 .5h11M5.500 10V3M3 5.500L5.500 3 8 5.500"/></svg>
<svg class="ic" style="left:185px;top:366px" width="12" height="11" fill="none" stroke="#444"><path d="M0 10.500h11M5.500 1V8M3 5.500L5.500 8 8 5.500"/></svg>
<svg class="ic" style="left:227px;top:365px" width="13" height="13" fill="none" stroke="#444"><circle cx="6" cy="6" r="4.7"/><path d="M9.500 9.500L12 12"/></svg>

<div class="row" style="top:396.5px"><svg class="i"><use href="#img"/></svg><b>导航栏动效</b><svg class="e"><use href="#eyeoff"/></svg><svg class="l"><use href="#lock"/></svg></div>
<div class="row" style="top:427px"><svg class="i"><use href="#img"/></svg><b>照片-8</b><svg class="e"><use href="#eye"/></svg><svg class="l"><use href="#lock"/></svg></div>
<div class="row" style="top:457px"><svg class="i"><use href="#img"/></svg><b>照片-48</b><svg class="e"><use href="#eye"/></svg><svg class="l"><use href="#lock"/></svg></div>
<div class="row" style="top:487px"><svg class="i"><use href="#tx"/></svg><b>标题-88</b><svg class="e"><use href="#eye"/></svg><svg class="l"><use href="#lock"/></svg></div>
<div class="row" style="top:517px"><svg class="i"><use href="#img"/></svg><b>照片-50</b><svg class="e"><use href="#eye"/></svg><svg class="l"><use href="#lock"/></svg></div>
<div class="row" style="top:547px"><svg class="i"><use href="#tx"/></svg><b>标题</b><svg class="e"><use href="#eye"/></svg><svg class="l"><use href="#lock"/></svg></div>
<div class="row" style="top:577px"><svg class="i"><use href="#img"/></svg><b>照片-15</b><svg class="e"><use href="#eye"/></svg><svg class="l"><use href="#lock"/></svg></div>
<div class="row" style="top:607px"><svg class="i"><use href="#tx"/></svg><b>标题-15</b><svg class="e"><use href="#eye"/></svg><svg class="l"><use href="#lock"/></svg></div>
<div class="row" style="top:637px"><svg class="i"><use href="#img"/></svg><b>照片-16</b><svg class="e"><use href="#eye"/></svg><svg class="l"><use href="#lock"/></svg></div>
<div class="row" style="top:668px"><svg class="i"><use href="#tx"/></svg><b>标题-12</b><svg class="e"><use href="#eye"/></svg><svg class="l"><use href="#lock"/></svg></div>
<div class="row" style="top:698px"><svg class="i" style="width:15px"><use href="#grp"/></svg><b>组</b><svg class="e"><use href="#eye"/></svg><svg class="l"><use href="#lock"/></svg></div>
<div class="row" style="top:728px"><svg class="i"><use href="#dots"/></svg><b>页面导航</b><svg class="e"><use href="#eyeoff"/></svg><svg class="l"><use href="#lock"/></svg></div>
<div class="row" style="top:758px"><svg class="i"><use href="#dots"/></svg><b>页面导航</b><svg class="e"><use href="#eyeoff"/></svg><svg class="l"><use href="#lock"/></svg></div>
<div class="row" style="top:788px"><svg class="i"><use href="#dots"/></svg><b>地图着色图</b><svg class="e"><use href="#eye"/></svg><svg class="l"><use href="#lock"/></svg></div>
<div class="row" style="top:818px;background:#0256f5;color:#fff"><svg class="i" viewBox="0 0 14 14"><path d="M1 12.500H13" stroke="#1c2a44"/><rect x="1.5" y="6" width="2.5" height="6" fill="#dfe6f5"/><path d="M9 4V11M6 7h6" stroke="#dfe6f5"/><circle cx="10" cy="3" r="2" fill="#3a8cf0"/></svg><b>3D地图</b><svg class="e" style="color:#fff"><use href="#eye"/></svg><svg class="l" style="color:#fff"><use href="#lock"/></svg></div>
<div class="row" style="top:848px"><svg class="i" style="width:15px"><use href="#grp"/></svg><b>组-1</b><svg class="e"><use href="#eye"/></svg><svg class="l"><use href="#lock"/></svg></div>
<div class="a" style="left:51px;top:709px;width:0;height:0;border-top:3.5px solid transparent;border-bottom:3.5px solid transparent;border-left:4.5px solid #666"></div>
<div class="a" style="left:51px;top:860px;width:0;height:0;border-top:3.5px solid transparent;border-bottom:3.5px solid transparent;border-left:4.5px solid #666"></div>
<div class="a" style="left:30px;top:893px;width:234px;height:1px;background:#dfe1e7"></div>
<svg class="ic" style="left:46px;top:902px" width="13" height="13" fill="none" stroke="#555"><path d="M.5 2h4l1 1.500h7V12.500H.5zM6.500 6v4M4.500 8h4"/></svg>
<svg class="ic" style="left:108px;top:902px" width="15" height="14" fill="none" stroke="#555"><path d="M.5 2.500H14.500M5 2.500V.5H10V2.500M2 2.500V13H13V2.500M5.500 5V11M7.500 5V11M9.500 5V11"/></svg>
<svg class="ic" style="left:172px;top:901px;color:#555" width="13" height="14"><use href="#lock"/></svg>
<svg class="ic" style="left:235px;top:904px;color:#555" width="14" height="10"><use href="#eye"/></svg>

<!-- RIGHT PANEL -->
<div class="a" style="left:1678px;top:84px;width:232px;height:839px;background:#f1f2f6"></div>
<div class="a" style="left:1905px;top:46px;width:5px;height:877px;background:#f1f2f6"></div>
<div class="a" style="left:1905px;top:110px;width:5px;height:813px;background:#c9ccd3"></div>
<div class="a" style="left:1678px;top:84px;width:227px;height:37px;background:#fff;border-bottom:1px solid #e2e4ea"></div>
<div class="t" style="left:1692px;top:103px;font-size:12px;color:#555">3D地图</div>
<div class="a" style="left:1685px;top:130px;width:218px;height:37px;background:#fff;border-radius:5px"></div>
<div class="t" style="left:1710px;top:149px;font-size:12px;color:#0256f5">样式</div>
<div class="a" style="left:1710px;top:164px;width:23px;height:3px;background:#0256f5;border-radius:2px"></div>
<div class="a" style="left:1757px;top:141px;width:1px;height:15px;background:#e2e4ea"></div>
<div class="t" style="left:1781px;top:149px;font-size:12px;color:#444">数据</div>
<div class="a" style="left:1829px;top:141px;width:1px;height:15px;background:#e2e4ea"></div>
<div class="t" style="left:1854px;top:149px;font-size:12px;color:#444">交互</div>
<svg class="ic" style="left:1698px;top:183px" width="192" height="14" viewBox="0 0 192 14"><g stroke="#999" fill="none"><path d="M.5 1V13M32 1V13M63.5 1V13M78 .5H88M102 7H114M128 13.5H138M153 1H165M153 13H165M179 1V13M191 1V13"/></g><g fill="#222"><rect x="2" y="4.500" width="9" height="5"/><rect x="27" y="4.500" width="10" height="5"/><rect x="53" y="4.500" width="9" height="5"/><rect x="80.5" y="2" width="5" height="11"/><rect x="105.500" y="1" width="5" height="12"/><rect x="130.500" y="1" width="5" height="11"/><rect x="154" y="4.500" width="10" height="5"/><rect x="182.500" y="2" width="5" height="10"/></g></svg>

<div class="inp" style="left:1693px;top:210px;width:84px;height:26px"></div><div class="inp" style="left:1811px;top:210px;width:84px;height:26px"></div>
<div class="inp" style="left:1693px;top:240px;width:84px;height:26px"></div><div class="inp" style="left:1811px;top:240px;width:84px;height:26px"></div>
<div class="inp" style="left:1693px;top:270px;width:84px;height:26px"></div>
<div class="t" style="left:1705px;top:223px;font-size:13px;color:#444">X</div><div class="t v" style="left:1731px;top:224px">863</div>
<div class="t" style="left:1823px;top:223px;font-size:13px;color:#444">Y</div><div class="t v" style="left:1848.5px;top:224px">79</div>
<div class="t" style="left:1704px;top:253px;font-size:12.5px;color:#444">W</div><div class="t v" style="left:1731px;top:254px">1179</div>
<div class="t" style="left:1823px;top:253px;font-size:13px;color:#444">H</div><div class="t v" style="left:1848.5px;top:254px">958</div>
<svg class="ic" style="left:1704px;top:276px" width="11" height="12" fill="none" stroke="#333"><path d="M1.500 0V10.500H10"/><circle cx="5" cy="2.500" r="1.200" fill="#333"/></svg>
<div class="t v" style="left:1731px;top:284px">0</div>
<svg class="ic" style="left:1789px;top:246px" width="8" height="14" fill="none" stroke="#333"><path d="M1 5V2.500a3 2 0 0 1 6 0V5M1 9v2.500a3 2 0 0 0 6 0V9"/></svg>

<div class="hr" style="top:311px"></div>
<div class="t sec" style="left:1692px;top:331.5px">位置约束</div>
<svg class="ic" style="left:1855px;top:329px" width="14" height="6" fill="none" stroke="#333"><path d="M0 0q7 4 14 0M3 2.500L2 5M7 3.500V6M11 2.500L12 5"/></svg>
<svg class="ic" style="left:1881px;top:327px" width="6" height="9" fill="none" stroke="#444"><path d="M1 .5l4 4-4 4"/></svg>
<div class="hr" style="top:350px"></div>

<div class="t sec" style="left:1692px;top:369px">地图</div>
<svg class="ic" style="left:1879px;top:366px" width="10" height="6" fill="none" stroke="#444"><path d="M.5.5l4.500 4.500 4.500-4.500"/></svg>
<div class="t lb" style="left:1692px;top:403px">背景</div>
<div class="inp" style="left:1760px;top:389px;width:28px;height:28px"></div><div class="a" style="left:1763px;top:392px;width:22px;height:22px;border-radius:3px;background:repeating-conic-gradient(#d9dce8 0 25%,#edeff4 0 50%) 0 0/11px 11px"></div>
<div class="inp" style="left:1792px;top:389px;width:103px;height:28px"></div><div class="t v" style="left:1800px;top:404px">#3067D1</div>
<div class="t lb" style="left:1692px;top:441px">区域高亮</div>
<div class="inp" style="left:1760px;top:427px;width:28px;height:28px"></div><div class="a" style="left:1763px;top:430px;width:22px;height:22px;border-radius:3px;background:repeating-conic-gradient(#ccd9f5 0 25%,#e4ebfa 0 50%) 0 0/11px 11px"></div>
<div class="inp" style="left:1792px;top:427px;width:103px;height:28px"></div><div class="t v" style="left:1800px;top:441px">#85B7FC</div>
<div class="t lb" style="left:1692px;top:478px">地图边界</div>
<div class="inp" style="left:1760px;top:464px;width:28px;height:28px"></div><div class="a" style="left:1763px;top:467px;width:22px;height:22px;border-radius:3px;background:#92aee2"></div>
<div class="inp" style="left:1792px;top:464px;width:103px;height:28px"></div><div class="t v" style="left:1800px;top:478px">#92AEE2</div>
<div class="inp" style="left:1760px;top:496px;width:135px;height:27px"></div>
<svg class="ic" style="left:1766px;top:505px" width="11" height="11"><rect y="0" width="11" height="1" fill="#222"/><rect y="3" width="11" height="2" fill="#222"/><rect y="7" width="11" height="4" fill="#222"/></svg>
<div class="t v" style="left:1788px;top:511px">2</div>
<div class="a" style="left:1684px;top:354.5px;width:221px;height:172px;border:3px solid #ee1c25"></div>

<div class="t lb" style="left:1692px;top:547px">区域名称</div>
<div class="inp" style="left:1760px;top:533px;width:135px;height:28px;background:#f1f2f6;border:1px solid #e6e8ee"></div>
<div class="inp" style="left:1762px;top:535px;width:65px;height:24px"></div>
<div class="c" style="left:1795px;top:547px;font-size:11px;color:#0256f5">显示</div>
<div class="c" style="left:1860px;top:547px;font-size:11px;color:#555">隐藏</div>
<div class="t lb" style="left:1692px;top:583px">文字</div>
<div class="inp" style="left:1760px;top:569px;width:100px;height:28px"></div>
<div class="t v" style="left:1767px;top:583px">Sans-serif</div>
<svg class="ic" style="left:1841px;top:581px" width="9" height="6" fill="none" stroke="#333"><path d="M.5.5l4 4 4-4"/></svg>
<div class="inp" style="left:1865px;top:569px;width:30px;height:28px"></div><div class="t v" style="left:1870px;top:584px">12</div>
<div class="inp" style="left:1760px;top:602px;width:28px;height:28px"></div><div class="a" style="left:1763px;top:605px;width:22px;height:22px;border-radius:3px;border:1px solid #eceef2;background:#fff"></div>
<div class="inp" style="left:1792px;top:602px;width:103px;height:28px"></div><div class="t v" style="left:1800px;top:617px">#FFFFFF</div>
<div class="inp" style="left:1760px;top:635px;width:135px;height:28px"></div>
<div class="c" style="left:1783px;top:650px;font-size:18px;color:#333">B</div>
<div class="c" style="left:1827px;top:650px;font-size:18px;color:#333;font-style:italic;font-family:'Liberation Serif',serif">I</div>
<div class="c" style="left:1871px;top:650px;font-size:15px;color:#333;text-decoration:underline">U</div>
<div class="t lb" style="left:1692px;top:686px">文字边框</div>
<div class="inp" style="left:1760px;top:672px;width:28px;height:28px"></div><div class="a" style="left:1763px;top:675px;width:22px;height:22px;border-radius:3px;background:repeating-conic-gradient(#e4e5e8 0 25%,#f5f5f7 0 50%) 0 0/11px 11px"></div>
<div class="inp" style="left:1792px;top:672px;width:103px;height:28px"></div>
<div class="t lb" style="left:1692px;top:723px">标签偏移</div>
<div class="inp" style="left:1760px;top:709px;width:135px;height:29px"></div><div class="t v" style="left:1766px;top:724px">0</div>
<div class="t lb" style="left:1692px;top:761px">3D设置</div>
<div class="inp" style="left:1760px;top:747px;width:135px;height:28px"></div><div class="a" style="left:1763px;top:750px;width:22px;height:22px;border-radius:3px;background:#f1f2f6"></div>
<div class="c" style="left:1774.5px;top:761px;font-size:14px;color:#444;font-family:'Liberation Serif',serif">T</div>
<div class="t" style="left:1789px;top:762px;font-size:11px;color:#c4c6cc">点击设置</div>
<div class="hr" style="top:784px"></div>
<div class="t sec" style="left:1692px;top:803px">提示框</div>
<svg class="ic" style="left:1881px;top:799px" width="6" height="9" fill="none" stroke="#444"><path d="M1 .5l4 4-4 4"/></svg>
<div class="hr" style="top:822px"></div>
<div class="t sec" style="left:1692px;top:841px">动画</div>
<svg class="ic" style="left:1881px;top:837px" width="6" height="9" fill="none" stroke="#444"><path d="M1 .5l4 4-4 4"/></svg>
<div class="hr" style="top:860px"></div>
<div class="t sec" style="left:1692px;top:879px">高级自定义</div>
<svg class="ic" style="left:1881px;top:876px" width="6" height="9" fill="none" stroke="#444"><path d="M1 .5l4 4-4 4"/></svg>

<!-- Floating assistant -->
<div class="a" style="left:1830px;top:844px;width:49px;height:49px;border-radius:14px;background:linear-gradient(150deg,#2a62f0 0%,#4a4fe0 55%,#8c3ec4 100%)"></div>
<svg class="ic" style="left:1836px;top:851px" width="37" height="35" viewBox="0 0 37 35"><ellipse cx="18.5" cy="17.5" rx="16" ry="15" fill="#7f90ee" stroke="#dfe6ff" stroke-width="1.5"/><ellipse cx="17" cy="19" rx="10" ry="10" fill="#cdd6fb"/><path d="M3 12Q12 3 28 6" fill="none" stroke="#fff" stroke-width="1.5"/></svg>

<!-- 3D Dialog -->
<div class="a" style="left:1435px;top:622.5px;width:232px;height:278px;background:#f5f6f8;border:1px solid #e4e6ec;box-shadow:0 4px 14px rgba(60,80,130,.18)"></div>
<div class="a" style="left:1436px;top:623.5px;width:230px;height:36px;background:#fff;border-bottom:1px solid #dcdee4"></div>
<div class="t" style="left:1452px;top:640px;font-size:13px;color:#222">3D设置</div>
<svg class="ic" style="left:1643px;top:636px" width="10" height="10" fill="none" stroke="#333"><path d="M.5.5l9 9M9.500.5l-9 9"/></svg>
<div class="t" style="left:1452px;top:690px;font-size:13px;color:#666">立体高度</div><div class="inp" style="left:1518px;top:676px;width:134px;height:29px"></div><div class="t v" style="left:1524px;top:691px">2</div>
<div class="t" style="left:1452px;top:742px;font-size:13px;color:#666">视角角度</div><div class="inp" style="left:1518px;top:729px;width:134px;height:28px"></div><div class="t v" style="left:1524px;top:744px">125</div>
<div class="t" style="left:1452px;top:795px;font-size:13px;color:#666">倾斜角度</div><div class="inp" style="left:1518px;top:781px;width:134px;height:28px"></div><div class="t v" style="left:1524px;top:796px">70</div>
<div class="t" style="left:1452px;top:847px;font-size:13px;color:#666">旋转角度</div><div class="inp" style="left:1518px;top:834px;width:134px;height:28px"></div><div class="t v" style="left:1524px;top:849px">0</div>
<div class="a" style="left:1436.5px;top:629.5px;width:228px;height:251.5px;border:3px solid #ee1c25"></div>
</body></html>
